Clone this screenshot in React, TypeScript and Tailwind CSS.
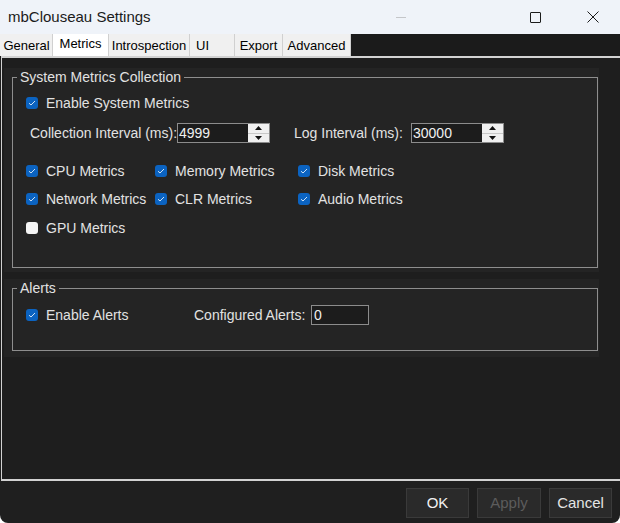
import React from 'react';

const font = "font-['Liberation_Sans',Arial,sans-serif]";

interface TabDef {
  label: string;
  width: string;
  align: string;
  selected?: boolean;
}

const tabs: TabDef[] = [
  { label: 'General', width: 'w-[52px]', align: 'justify-center' },
  { label: 'Metrics', width: 'w-[56px]', align: 'justify-center', selected: true },
  { label: 'Introspection', width: 'w-[81px]', align: 'justify-center' },
  { label: 'UI', width: 'w-[45px]', align: 'justify-start pl-[6px]' },
  { label: 'Export', width: 'w-[48px]', align: 'justify-center' },
  { label: 'Advanced', width: 'w-[68px]', align: 'justify-center' },
];

function CheckBox({ checked, label }: { checked: boolean; label: string }) {
  return (
    <div className="flex items-center h-[20px] gap-[8px] text-[14px] text-[#e2e2e2] whitespace-nowrap">
      {checked ? (
        <span className="w-[12px] h-[12px] rounded-[3px] bg-[#0b63c1] flex items-center justify-center shrink-0">
          <svg width="8" height="6" viewBox="0 0 8 6">
            <path d="M1 3.2 L3 5 L7 1" stroke="#cfe2f6" strokeWidth="1" fill="none" />
          </svg>
        </span>
      ) : (
        <span className="w-[12px] h-[12px] rounded-[3px] bg-[#f4f4f4] shrink-0" />
      )}
      <span>{label}</span>
    </div>
  );
}

function NumericBox({ value }: { value: string }) {
  return (
    <div className="flex w-[93px] h-[20px] border border-[#8c8c8c] bg-[#1c1c1c] shrink-0">
      <div className="flex-1 overflow-hidden text-[14px] leading-[18px] text-[#f0f0f0] whitespace-nowrap pl-px">
        {value}
      </div>
      <div className="w-[21px] bg-[#f0f0f0] flex flex-col">
        <div className="flex-1 flex items-center justify-center border-b border-[#c8c8c8]">
          <svg width="7" height="4" viewBox="0 0 7 4">
            <path d="M0 4 L3.5 0 L7 4 Z" fill="#111" />
          </svg>
        </div>
        <div className="flex-1 flex items-center justify-center">
          <svg width="7" height="4" viewBox="0 0 7 4">
            <path d="M0 0 L7 0 L3.5 4 Z" fill="#111" />
          </svg>
        </div>
      </div>
    </div>
  );
}

function GroupBox({ title, children }: { title: string; children: React.ReactNode }) {
  return (
    <fieldset className="border border-[#8e8e8e] ml-[8px] mr-[1px]">
      <legend className="ml-[4px] px-[3px] text-[14px] leading-[16px] text-[#e2e2e2]">{title}</legend>
      {children}
    </fieldset>
  );
}

export default function App() {
  return (
    <div className={`${font} w-[620px] h-[523px] flex flex-col bg-[#1f1f1f] overflow-hidden rounded-b-[8px]`}>
      {/* Title bar */}
      <div className="h-[34px] shrink-0 bg-[#eff3f9] flex items-center">
        <span className="pl-[8px] text-[15px] text-[#1b1b1b] flex-1">mbClouseau Settings</span>
        <div className="w-[54px] flex justify-center">
          <span className="w-[10px] h-px bg-[#c4c6c9]" />
        </div>
        <div className="w-[80px]" />
        <div className="w-[54px] flex justify-center">
          <span className="w-[11px] h-[11px] border border-[#1b1b1b] rounded-[1px]" />
        </div>
        <div className="w-[4px]" />
        <div className="w-[54px] flex justify-center">
          <svg width="12" height="12" viewBox="0 0 12 12">
            <path d="M0.5 0.5 L11.5 11.5 M11.5 0.5 L0.5 11.5" stroke="#1b1b1b" strokeWidth="1" />
          </svg>
        </div>
      </div>

      {/* Tab strip */}
      <div className="h-[22px] shrink-0 flex bg-[#1b1b1b]">
        <div className="w-px bg-[#f0f0f0]" />
        {tabs.map((t) => (
          <div
            key={t.label}
            className={`${t.width} ${t.align} flex items-center h-full text-[13px] text-black border-r border-[#d0d0d0] ${
              t.selected ? 'bg-white pb-[3px]' : 'bg-[#f0f0f0] pt-[1px]'
            }`}
          >
            {t.label}
          </div>
        ))}
      </div>

      {/* Tab page */}
      <div className="flex-1 border-t-2 border-b-2 border-l border-[#d2d2d2] ml-px bg-[#1e1e1e]">
        <div className="mt-[10px] ml-[2px] mr-[21px] bg-[#242424] pt-px pb-[4px]">
          <GroupBox title="System Metrics Collection">
            <div className="pl-[13px] pt-[8px] pb-[29px]">
              <CheckBox checked label="Enable System Metrics" />
              <div className="flex items-center h-[20px] mt-[10px] text-[14px] text-[#e2e2e2] whitespace-nowrap">
                <span className="w-[151px] pl-[4px] shrink-0">Collection Interval (ms):</span>
                <NumericBox value="4999" />
                <span className="w-[117px] pl-[24px] box-content shrink-0">Log Interval (ms):</span>
                <NumericBox value="30000" />
              </div>
              <div className="mt-[18px] flex flex-col gap-[8px]">
                <div className="flex">
                  <div className="w-[129px]"><CheckBox checked label="CPU Metrics" /></div>
                  <div className="w-[143px]"><CheckBox checked label="Memory Metrics" /></div>
                  <CheckBox checked label="Disk Metrics" />
                </div>
                <div className="flex">
                  <div className="w-[129px]"><CheckBox checked label="Network Metrics" /></div>
                  <div className="w-[143px]"><CheckBox checked label="CLR Metrics" /></div>
                  <CheckBox checked label="Audio Metrics" />
                </div>
                <div className="flex mt-px">
                  <CheckBox checked={false} label="GPU Metrics" />
                </div>
              </div>
            </div>
          </GroupBox>
        </div>

        <div className="mt-[7px] ml-[2px] mr-[21px] bg-[#242424] pt-px pb-[6px]">
          <GroupBox title="Alerts">
            <div className="pl-[13px] pt-[8px] pb-[24px] flex items-center">
              <div className="w-[168px]"><CheckBox checked label="Enable Alerts" /></div>
              <span className="w-[117px] text-[14px] text-[#e2e2e2] whitespace-nowrap pt-[1px]">Configured Alerts:</span>
              <div className="w-[58px] h-[20px] border border-[#8c8c8c] bg-[#1c1c1c] text-[14px] leading-[18px] text-[#f0f0f0] pl-[2px]">
                0
              </div>
            </div>
          </GroupBox>
        </div>
      </div>

      {/* Bottom buttons */}
      <div className="h-[42px] shrink-0 flex justify-end items-start pt-[7px] pr-[8px] gap-[8px]">
        <button className="w-[63px] h-[30px] bg-[#2a2a2a] border border-[#3a3a3a] text-[15px] text-[#f2f2f2]">OK</button>
        <button className="w-[64px] h-[30px] bg-[#2a2a2a] border border-[#3a3a3a] text-[15px] text-[#5c5c5c]">Apply</button>
        <button className="w-[63px] h-[30px] bg-[#2a2a2a] border border-[#3a3a3a] text-[15px] text-[#e4e4e4]">Cancel</button>
      </div>
    </div>
  );
}
